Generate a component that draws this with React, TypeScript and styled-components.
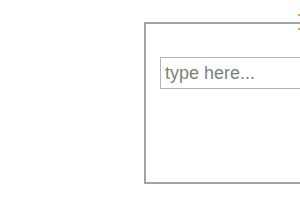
import React from "react";
import styled, { createGlobalStyle } from "styled-components";

const GlobalStyle = createGlobalStyle`
  html, body {
    margin: 0;
    padding: 0;
    background: #ffffff;
    overflow: hidden;
  }
  body {
    font-family: "Liberation Sans", Arial, sans-serif;
  }
`;

const Page = styled.div`
  position: relative;
  width: 300px;
  height: 210px;
  overflow: hidden;
  padding: 22px 0 0 144px;
  box-sizing: border-box;
`;

const Panel = styled.div`
  width: 220px;
  height: 162px;
  box-sizing: border-box;
  border: 2px solid #a3a3a3;
  padding: 33px 0 0 14px;
`;

const Field = styled.input`
  display: block;
  width: 220px;
  height: 32px;
  box-sizing: border-box;
  border: 1px solid #b4b4b4;
  padding: 0 4px;
  font-family: "Liberation Sans", Arial, sans-serif;
  font-size: 18px;
  color: #333;
  outline: none;

  &::placeholder {
    color: #808080;
  }
`;

const Marker = styled.span`
  position: absolute;
  right: 0;
  top: ${(p: { $top: number }) => p.$top}px;
  width: 2px;
  height: 2px;
  background: #e8a850;
`;

export default function App() {
  return (
    <>
      <GlobalStyle />
      <Page>
        <Panel>
          <Field placeholder="type here..." />
        </Panel>
        <Marker $top={14} />
        <Marker $top={28} />
      </Page>
    </>
  );
}
